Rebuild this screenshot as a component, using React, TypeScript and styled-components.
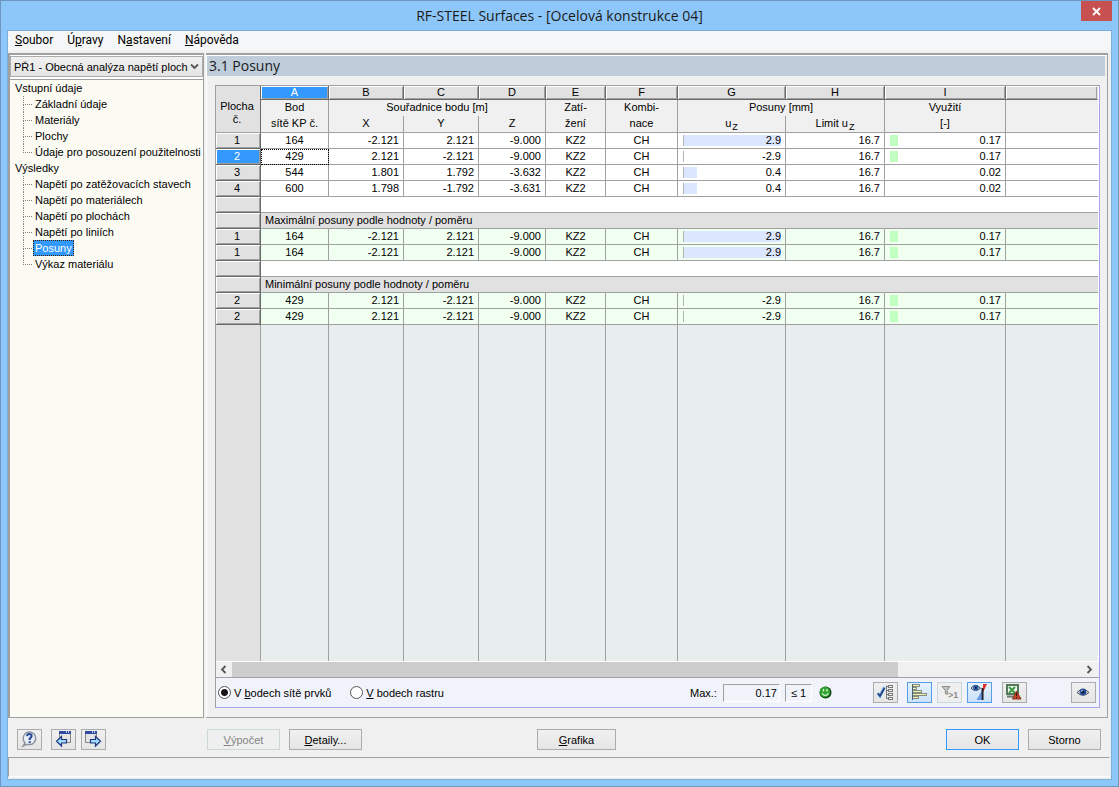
import React, { useState } from "react";
import styled, { createGlobalStyle, css } from "styled-components";

const LINE = "#a0a0a0";
const ACCENT = "#3399ff";
const UI_FONT = `"Liberation Sans", Arial, sans-serif`;
const MENU_FONT = `Roboto, "Noto Sans", sans-serif`;
const TITLE_FONT = `"Open Sans", "Noto Sans", sans-serif`;

const GlobalStyle = createGlobalStyle`
  *, *::before, *::after { box-sizing: border-box; }
  body { margin: 0; background: #8dc6f9; }
  button, input, select { font: inherit; color: inherit; }
`;

const Window = styled.div`
  display: flex;
  flex-direction: column;
  height: 100vh;
  min-height: 520px;
  border: 1px solid #6b97c2;
  background: #8dc6f9;
  color: #000;
  font: 11px/16px ${UI_FONT};
`;

const TitleBar = styled.header`
  display: grid;
  grid-template-columns: 37px 1fr 37px;
  height: 29px;
`;

const Title = styled.h1`
  margin: 0;
  font: 400 14px/29px ${TITLE_FONT};
  text-align: center;
  color: #1a1a1a;
`;

const CloseButton = styled.button`
  display: grid;
  place-items: center;
  width: 31px;
  height: 20px;
  padding: 0;
  border: 0;
  background: #c75050;
`;

const Client = styled.div`
  flex: 1;
  min-height: 0;
  display: flex;
  flex-direction: column;
  margin: 0 6px 6px;
  border: 1px solid #79afdd;
  background: #f0f0f0;
`;

const MenuBar = styled.nav`
  display: flex;
  gap: 14px;
  height: 19px;
  padding-left: 7px;
  background: #f5f6f7;
  font: 12px/19px ${MENU_FONT};
`;

const MenuItem = styled.button`
  padding: 0;
  border: 0;
  background: none;
`;

const Body = styled.div`
  flex: 1;
  min-height: 0;
  display: flex;
  gap: 2px;
  margin: 3px 3px 0 0;
`;

const Sidebar = styled.aside`
  flex: none;
  width: 196px;
  display: flex;
  flex-direction: column;
  padding-top: 1px;
  border: solid ${LINE};
  border-width: 2px 1px 1px 2px;
  background: #fff;
`;

const CaseField = styled.div`
  display: grid;
  height: 21px;
  margin-bottom: 2px;
  align-items: center;
`;

const CaseSelect = styled.select`
  grid-area: 1 / 1;
  width: 100%;
  height: 21px;
  padding: 0 12px 0 3px;
  appearance: none;
  border: 1px solid #acacac;
  border-radius: 0;
  background: linear-gradient(#f0f0f0, #e5e5e5);
`;

const CaseArrow = styled.svg`
  grid-area: 1 / 1;
  justify-self: end;
  margin-right: 4px;
  pointer-events: none;
`;

const Tree = styled.ul`
  flex: 1;
  margin: 0;
  padding: 0 0 0 5px;
  border-top: 1px solid ${LINE};
  list-style: none;
  background: #fcfbf3;
`;

const TreeBranch = styled.ul`
  margin: 0;
  padding: 0 0 0 8px;
  list-style: none;
`;

const TreeLeaf = styled.li`
  display: flex;
  gap: 1px;
  height: 16px;
`;

const TreeLines = styled.span<{ $last: boolean }>`
  width: 9px;
  &::before {
    content: "";
    display: block;
    height: 9px;
    border-left: 1px dotted #808080;
    border-bottom: 1px dotted #808080;
  }
  &::after {
    content: "";
    display: ${(p) => (p.$last ? "none" : "block")};
    height: 7px;
    border-left: 1px dotted #808080;
  }
`;

const TreeButton = styled.button<{ $selected: boolean }>`
  height: 16px;
  padding: 0 1px;
  border: 1px dotted ${(p) => (p.$selected ? "#3a2410" : "transparent")};
  background: ${(p) => (p.$selected ? ACCENT : "transparent")};
  color: ${(p) => (p.$selected ? "#fff" : "#000")};
  line-height: 14px;
  white-space: nowrap;
`;

const Main = styled.main`
  flex: 1;
  min-width: 0;
  display: flex;
  flex-direction: column;
  padding: 1px 0 0 1px;
  border: solid ${LINE};
  border-width: 2px 1px 1px 0;
  box-shadow: inset 1px 1px #fff;
`;

const Heading = styled.h2`
  height: 20px;
  margin: 0 2px 0 0;
  padding-left: 2px;
  background: #bfccda;
  color: #1a1a1a;
  font: 400 14px/20px ${TITLE_FONT};
`;

const Frame = styled.section`
  flex: 1;
  min-height: 0;
  display: flex;
  flex-direction: column;
  margin: 9px 7px 9px 8px;
  border: solid;
  border-width: 1px;
  border-color: ${LINE} #a6a6e6 #a6a6e6 ${LINE};
  background: #fff;
`;

const TableArea = styled.div`
  flex: 1;
  min-height: 0;
  overflow: hidden;
  padding-right: 1px;
`;

const Grid = styled.table`
  width: 100%;
  height: 100%;
  table-layout: fixed;
  border-spacing: 0;
  line-height: 15px;
`;

const bevel = css`
  background: #e1e1e1;
  border: solid #696969;
  border-width: 0 1px 1px 0;
  box-shadow: inset 1px 1px #fff, inset -1px -1px ${LINE};
`;

const ColumnLetter = styled.th<{ $selected?: boolean }>`
  ${bevel}
  height: 14px;
  padding: 0;
  font-weight: 400;
  line-height: 13px;
  ${(p) => p.$selected && `background: ${ACCENT}; color: #fff;`}
  &:last-child { border-right-color: #e1e1e1; }
`;

const CornerHead = styled.th`
  padding: 7px 2px 0 0;
  border-right: 1px solid #696969;
  border-bottom: 1px solid ${LINE};
  background: #e1e1e1;
  font-weight: 400;
  line-height: 13px;
`;

const HeadCell = styled.th<{ $top?: boolean }>`
  height: ${(p) => (p.$top ? 16 : 17)}px;
  padding: 0 0 2px;
  border: solid ${LINE};
  border-width: ${(p) => (p.$top ? "0 1px 0 0" : "0 1px 1px 0")};
  background: #f0f0f0;
  font-weight: 400;
  line-height: 14px;
  &:last-child { border-right: 0; }
`;

const Sub = styled.span`
  margin-left: 1px;
  font-size: 9px;
  line-height: 0;
  vertical-align: sub;
`;

const RowHead = styled.th<{ $selected?: boolean }>`
  ${bevel}
  height: 16px;
  padding: 0 2px 0 0;
  font-weight: 400;
  ${(p) => p.$selected && `background: ${ACCENT}; color: #fff;`}
`;

const Cell = styled.td<{ $align?: "center" | "right"; $green?: boolean; $focus?: boolean }>`
  height: 16px;
  padding: 0 ${(p) => (p.$align === "right" ? 4 : 0)}px 0 0;
  border: solid ${LINE};
  border-width: 0 1px 1px 0;
  background: ${(p) => (p.$green ? "#f0fff0" : "#fff")};
  text-align: ${(p) => p.$align};
  ${(p) => p.$focus && "outline: 1px dotted #000; outline-offset: -1px;"}
  &:last-child { border-right: 0; }
`;

const SectionCell = styled.td<{ $title?: boolean }>`
  height: 16px;
  padding: 0 0 0 4px;
  border-bottom: 1px solid ${LINE};
  background: ${(p) => (p.$title ? "#e1e1e1" : "#fff")};
`;

const FillerCell = styled.td<{ $head?: boolean }>`
  padding: 0;
  border-right: 1px solid ${LINE};
  background: ${(p) => (p.$head ? "#e1e1e1" : "#e8eeee")};
  &:last-child { border-right: 0; }
`;

const Meter = styled.div`
  display: grid;
  align-items: center;
  padding-left: 5px;
`;

const Bar = styled.span<{ $color: string; $edge?: boolean }>`
  grid-area: 1 / 1;
  height: 11px;
  border-left: ${(p) => (p.$edge ? `1px solid #b4b4b4` : "0")};
  background: ${(p) => p.$color};
`;

const MeterValue = styled.span`
  grid-area: 1 / 1;
`;

const ScrollBar = styled.div`
  display: grid;
  grid-template-columns: 16px 1fr 18px;
  height: 17px;
  border-top: 1px solid #fff;
  border-bottom: 1px solid ${LINE};
  background: #f0f0f0;
`;

const ScrollButton = styled.button`
  display: grid;
  place-items: center;
  padding: 0 2px 0 0;
  border: 0;
  background: none;
`;

const ScrollThumb = styled.div`
  width: 78.5%;
  background: #cdcdcd;
`;

const Options = styled.div`
  display: flex;
  align-items: center;
  height: 29px;
  padding: 0 3px 0 2px;
  background: #f0f3fa;
`;

const RadioLabel = styled.label`
  display: flex;
  align-items: center;
  gap: 3px;
  margin-right: 19px;
  white-space: nowrap;
`;

const Radio = styled.input`
  appearance: none;
  width: 13px;
  height: 13px;
  margin: 0;
  border: 1px solid #555;
  border-radius: 50%;
  background: #fff;
  &:checked { background: radial-gradient(circle, #1a1418 0 3px, #fff 4px); }
`;

const MaxLabel = styled.label`
  width: 33px;
  margin-left: auto;
`;

const MaxInput = styled.input`
  width: 57px;
  height: 18px;
  margin-right: 5px;
  padding: 0 2px;
  border: solid;
  border-width: 1px;
  border-color: ${LINE} #fff #fff ${LINE};
  background: #f0f3fa;
  text-align: right;
`;

const LimitBox = styled.output`
  width: 27px;
  height: 18px;
  margin-right: 7px;
  border: solid;
  border-width: 1px;
  border-color: ${LINE} #fff #fff ${LINE};
  text-align: center;
`;

const ToolGroup = styled.div<{ $before: number; $gap?: number }>`
  display: flex;
  gap: ${(p) => p.$gap ?? 5}px;
  margin-left: ${(p) => p.$before}px;
`;

const IconButton = styled.button<{ $active?: boolean }>`
  flex: none;
  width: 25px;
  height: 21px;
  padding: 0;
  border: 1px solid ${(p) => (p.$active ? "#569de5" : "#acacac")};
  background: ${(p) => (p.$active ? "linear-gradient(#e6f2fd, #c9e2fa)" : "linear-gradient(#f0f0f0, #e5e5e5)")};
  &:disabled { border-color: #ccd8d8; background: #efefef; }
  svg { display: block; }
`;

const Footer = styled.footer`
  display: flex;
  height: 39px;
  padding: 11px 10px 0 9px;
`;

const FooterIcons = styled.div`
  display: flex;
  flex: none;
  gap: 5px;
  width: 190px;
`;

const FooterIconGap = styled.span`
  width: 4px;
  margin-left: -5px;
`;

const PushButton = styled.button<{ $primary?: boolean; $wide?: boolean }>`
  flex: none;
  width: ${(p) => (p.$wide ? 79 : 73)}px;
  height: 21px;
  padding: 0;
  border: 1px solid ${(p) => (p.$primary ? ACCENT : "#acacac")};
  background: linear-gradient(#f0f0f0, #e5e5e5);
  &:disabled { border-color: #ccd8d8; background: #efefef; color: #838383; }
`;

const ButtonPair = styled.div`
  display: flex;
  gap: 9px;
  &:last-child { margin-left: auto; }
`;

const MiddleButton = styled.div`
  margin-left: 175px;
`;

const StatusBar = styled.div`
  flex: none;
  height: 20px;
  margin: 0 1px 2px 0;
  border: solid;
  border-width: 1px;
  border-color: ${LINE} #f0f0f0 #fff ${LINE};
`;

const Glyph = ({ children }: { children: React.ReactNode }) => (
  <svg width="23" height="19" viewBox="0 0 23 19" aria-hidden="true">
    {children}
  </svg>
);

const HelpIcon = () => (
  <Glyph>
    <path d="M5 16l2-3.2A6.3 6.3 0 1 1 11.500 14.600Q9 14.600 8 14.500Z" fill="#e9edf4" stroke="#8c929a" strokeWidth="1.400" />
    <path d="M9 6.200Q9.300 3.800 11.600 3.900Q14 4.200 13.500 6.500Q13 7.700 11.700 8.500V10" fill="none" stroke="#24459c" strokeWidth="2" />
    <path d="M10.700 11.200h2v2h-2z" fill="#24459c" />
  </Glyph>
);

const PageArrowIcon = ({ next }: { next?: boolean }) => (
  <Glyph>
    <rect x={next ? 3.5 : 7.5} y="2.500" width="11" height="10" fill="#e4e4e4" stroke="#8a8a8a" />
    <rect x={next ? 3 : 7} y="1" width="12" height="3" fill="#2f4ba0" />
    <path d={next ? "M10 1h1v2h-1zM12 1h1v2h-1z" : "M14 1h1v2h-1zM16 1h1v2h-1z"} fill="#b9c6ea" />
    <path
      d={next ? "M8.500 9.500h5V6.500l5 4.800-5 4.700v-3h-5z" : "M14.500 9.500h-5V6.500l-5 4.800 5 4.700v-3h5z"}
      fill="#9fdcff"
      stroke="#20367f"
      strokeWidth="1.200"
    />
  </Glyph>
);

const CheckTreeIcon = () => (
  <Glyph>
    <path d="M12.500 2.500v13M12.500 3.500h2M12.500 7.500h2M12.500 11.500h2M12.500 15.500h2" stroke="#777" fill="none" />
    {[2.5, 6.5, 10.5, 14.5].map((y) => (
      <rect key={y} x="14.500" y={y} width="4" height="2" fill="#f4f4f4" stroke="#777" />
    ))}
    <path d="M3.500 10L6 13L10.500 4" fill="none" stroke="#8db3e2" strokeWidth="3" />
    <path d="M4 10.500L6 13L10.500 5" fill="none" stroke="#1c437f" strokeWidth="1.600" />
  </Glyph>
);

const BarsIcon = () => (
  <Glyph>
    {[[2, 7], [5, 4], [8, 9], [11, 14], [14, 6]].map(([y, w]) => (
      <rect key={y} x="4.500" y={y - 0.5} width={w} height="2" fill="#f0f0b0" stroke="#7b8576" strokeWidth="0.900" />
    ))}
    <path d="M4.500 1v16" stroke="#4c6272" />
  </Glyph>
);

const FilterIcon = () => (
  <Glyph>
    <path d="M4 3.500h8L9.300 7.500v4l-2-1v-3z" fill="#c4c4c4" stroke="#8b8b8b" />
    <text x="10" y="15" fontFamily="Liberation Sans" fontSize="9" fontWeight="700" fill="#8b8b8b">&gt;1</text>
  </Glyph>
);

const EyeScaleIcon = () => (
  <Glyph>
    <path d="M14 1h5l-3 7.500h-2z" fill="#fff" />
    <path d="M15 1h4l-3.500 7.500h-1z" fill="#d93030" />
    <path d="M13.500 8v9H8.500z" fill="#6d9bea" />
    <path d="M14.500 5v12" stroke="#1c1c2c" strokeWidth="2" />
    <path d="M3 5.200Q7.500-.5 12.500 5.200Q7.500 9.800 3 5.200Z" fill="#dfe6ee" stroke="#33414f" />
    <circle cx="7.800" cy="4.800" r="2.700" fill="#2c5caa" />
    <circle cx="7.800" cy="4.800" r="1" fill="#0b1a38" />
  </Glyph>
);

const ExcelIcon = () => (
  <Glyph>
    <rect x="4" y="2" width="11" height="9" fill="#eef6ec" stroke="#55785a" strokeWidth="2" />
    <path d="M6 4l6 6M12 4l-6 6" stroke="#3d9a46" strokeWidth="2" />
    <path d="M4 13.500h7" stroke="#6b7b6c" strokeWidth="2" />
    <path d="M13.500 8l4.500 8h-8.500z" fill="#c5472a" stroke="#8c2f1c" />
    <path d="M13.500 10v3M13.500 14v1" stroke="#2e120c" />
  </Glyph>
);

const EyeIcon = () => (
  <Glyph>
    <path d="M5 9.500Q11 3 17 9.500Q11 15 5 9.500Z" fill="#d5d9df" stroke="#4c5460" />
    <circle cx="11" cy="9" r="3.400" fill="#2c559f" />
    <circle cx="11" cy="9" r="1.500" fill="#0a1228" />
    <circle cx="10" cy="7.900" r="0.800" fill="#b8d0f4" />
  </Glyph>
);

const Smiley = () => (
  <svg width="13" height="13" viewBox="0 0 13 13" role="img" aria-label="OK">
    <circle cx="6.500" cy="6.500" r="6" fill="#123d12" />
    <circle cx="6" cy="6" r="5.200" fill="#2fa52f" />
    <path d="M4.500 3v2.500M8 3v2.500" stroke="#d8f5d0" strokeWidth="1.400" />
    <path d="M3 7.300Q6.200 11.500 9.500 7.300" fill="none" stroke="#e6f8e0" strokeWidth="1.200" />
  </svg>
);

const treeData = [
  { title: "Vstupní údaje", items: ["Základní údaje", "Materiály", "Plochy", "Údaje pro posouzení použitelnosti"] },
  {
    title: "Výsledky",
    items: [
      "Napětí po zatěžovacích stavech",
      "Napětí po materiálech",
      "Napětí po plochách",
      "Napětí po liniích",
      "Posuny",
      "Výkaz materiálu",
    ],
  },
];

const columnWidths = [45, 68, 75, 75, 67, 60, 72, 108, 99, 121];
const letters = ["A", "B", "C", "D", "E", "F", "G", "H", "I"];

type Row = { id: number; node: string; x: string; y: string; z: string; uz: number; ratio: number };

const rows: Row[] = [
  { id: 1, node: "164", x: "-2.121", y: "2.121", z: "-9.000", uz: 2.9, ratio: 0.17 },
  { id: 2, node: "429", x: "2.121", y: "-2.121", z: "-9.000", uz: -2.9, ratio: 0.17 },
  { id: 3, node: "544", x: "1.801", y: "1.792", z: "-3.632", uz: 0.4, ratio: 0.02 },
  { id: 4, node: "600", x: "1.798", y: "-1.792", z: "-3.631", uz: 0.4, ratio: 0.02 },
];

const DataRow = ({ row, green, selected }: { row: Row; green?: boolean; selected?: boolean }) => (
  <tr>
    <RowHead scope="row" $selected={selected}>{row.id}</RowHead>
    <Cell $align="center" $green={green} $focus={selected}>{row.node}</Cell>
    <Cell $align="right" $green={green}>{row.x}</Cell>
    <Cell $align="right" $green={green}>{row.y}</Cell>
    <Cell $align="right" $green={green}>{row.z}</Cell>
    <Cell $align="center" $green={green}>KZ2</Cell>
    <Cell $align="center" $green={green}>CH</Cell>
    <Cell $align="right" $green={green}>
      <Meter>
        <Bar $color="#dbe6ff" $edge style={{ width: `${Math.max(1, (row.uz / 2.9) * 100)}%` }} />
        <MeterValue>{row.uz.toFixed(1)}</MeterValue>
      </Meter>
    </Cell>
    <Cell $align="right" $green={green}>16.7</Cell>
    <Cell $align="right" $green={green}>
      <Meter>
        {row.ratio > 0.05 && <Bar $color="#c0ffc0" style={{ width: `${row.ratio * 42}%` }} />}
        <MeterValue>{row.ratio.toFixed(2)}</MeterValue>
      </Meter>
    </Cell>
    <Cell $green={green} />
  </tr>
);

const SectionRow = ({ title }: { title?: string }) => (
  <tr>
    <RowHead />
    <SectionCell colSpan={10} $title={Boolean(title)}>{title}</SectionCell>
  </tr>
);

const ResultTable = () => (
  <Grid>
    <colgroup>
      {columnWidths.map((w, i) => <col key={i} width={w} />)}
      <col />
    </colgroup>
    <thead>
      <tr>
        <CornerHead rowSpan={3}>Plocha<br />č.</CornerHead>
        {letters.map((l) => <ColumnLetter key={l} $selected={l === "A"}>{l}</ColumnLetter>)}
        <ColumnLetter />
      </tr>
      <tr>
        <HeadCell $top>Bod</HeadCell>
        <HeadCell $top colSpan={3}>Souřadnice bodu [m]</HeadCell>
        <HeadCell $top>Zatí-</HeadCell>
        <HeadCell $top>Kombi-</HeadCell>
        <HeadCell $top colSpan={2}>Posuny [mm]</HeadCell>
        <HeadCell $top>Využití</HeadCell>
        <HeadCell $top />
      </tr>
      <tr>
        <HeadCell>sítě KP č.</HeadCell>
        <HeadCell>X</HeadCell>
        <HeadCell>Y</HeadCell>
        <HeadCell>Z</HeadCell>
        <HeadCell>žení</HeadCell>
        <HeadCell>nace</HeadCell>
        <HeadCell>u<Sub>Z</Sub></HeadCell>
        <HeadCell>Limit u<Sub>Z</Sub></HeadCell>
        <HeadCell>[-]</HeadCell>
        <HeadCell />
      </tr>
    </thead>
    <tbody>
      {rows.map((r) => <DataRow key={r.id} row={r} selected={r.id === 2} />)}
      <SectionRow />
      <SectionRow title="Maximální posuny podle hodnoty / poměru" />
      <DataRow row={rows[0]} green />
      <DataRow row={rows[0]} green />
      <SectionRow />
      <SectionRow title="Minimální posuny podle hodnoty / poměru" />
      <DataRow row={rows[1]} green />
      <DataRow row={rows[1]} green />
      <tr>
        <FillerCell $head />
        {[...letters, ""].map((l) => <FillerCell key={l} />)}
      </tr>
    </tbody>
  </Grid>
);

export default function App() {
  const [page, setPage] = useState("Posuny");
  const [mode, setMode] = useState("mesh");

  return (
    <>
      <GlobalStyle />
      <Window>
        <TitleBar>
          <span />
          <Title>RF-STEEL Surfaces - [Ocelová konstrukce 04]</Title>
          <CloseButton aria-label="Zavřít">
            <svg width="9" height="9" viewBox="0 0 9 9"><path d="M1 1l7 7M8 1l-7 7" stroke="#fff" strokeWidth="1.800" /></svg>
          </CloseButton>
        </TitleBar>
        <Client>
          <MenuBar>
            <MenuItem><u>S</u>oubor</MenuItem>
            <MenuItem>Ú<u>p</u>ravy</MenuItem>
            <MenuItem>N<u>a</u>stavení</MenuItem>
            <MenuItem><u>N</u>ápověda</MenuItem>
          </MenuBar>
          <Body>
            <Sidebar>
              <CaseField>
                <CaseSelect aria-label="Případ">
                  <option>PŘ1 - Obecná analýza napětí ploch</option>
                </CaseSelect>
                <CaseArrow width="9" height="7" viewBox="0 0 9 7">
                  <path d="M1 1.500l3.500 3.500L8 1.500" fill="none" stroke="#555" strokeWidth="1.800" />
                </CaseArrow>
              </CaseField>
              <Tree>
                {treeData.map((group) => (
                  <li key={group.title}>
                    {group.title}
                    <TreeBranch>
                      {group.items.map((item, i) => (
                        <TreeLeaf key={item}>
                          <TreeLines $last={i === group.items.length - 1} />
                          <TreeButton $selected={item === page} onClick={() => setPage(item)}>{item}</TreeButton>
                        </TreeLeaf>
                      ))}
                    </TreeBranch>
                  </li>
                ))}
              </Tree>
            </Sidebar>
            <Main>
              <Heading>3.1 Posuny</Heading>
              <Frame>
                <TableArea><ResultTable /></TableArea>
                <ScrollBar>
                  <ScrollButton aria-label="Posunout vlevo">
                    <svg width="7" height="9" viewBox="0 0 7 9"><path d="M5.500 1L2 4.500L5.500 8" fill="none" stroke="#555" strokeWidth="1.800" /></svg>
                  </ScrollButton>
                  <ScrollThumb />
                  <ScrollButton aria-label="Posunout vpravo">
                    <svg width="7" height="9" viewBox="0 0 7 9"><path d="M1.500 1L5 4.500L1.500 8" fill="none" stroke="#555" strokeWidth="1.800" /></svg>
                  </ScrollButton>
                </ScrollBar>
                <Options>
                  <RadioLabel>
                    <Radio type="radio" name="mode" checked={mode === "mesh"} onChange={() => setMode("mesh")} />
                    <span>V <u>b</u>odech sítě prvků</span>
                  </RadioLabel>
                  <RadioLabel>
                    <Radio type="radio" name="mode" checked={mode === "grid"} onChange={() => setMode("grid")} />
                    <span><u>V</u> bodech rastru</span>
                  </RadioLabel>
                  <MaxLabel htmlFor="max">Max.:</MaxLabel>
                  <MaxInput id="max" readOnly value="0.17" />
                  <LimitBox>≤ 1</LimitBox>
                  <Smiley />
                  <ToolGroup $before={41} $gap={9}>
                    <IconButton aria-label="Výběr"><CheckTreeIcon /></IconButton>
                    <IconButton $active aria-label="Sloupce"><BarsIcon /></IconButton>
                  </ToolGroup>
                  <ToolGroup $before={5}>
                    <IconButton disabled aria-label="Filtr"><FilterIcon /></IconButton>
                    <IconButton $active aria-label="Barevná škála"><EyeScaleIcon /></IconButton>
                  </ToolGroup>
                  <ToolGroup $before={10}>
                    <IconButton aria-label="Excel"><ExcelIcon /></IconButton>
                  </ToolGroup>
                  <ToolGroup $before={44}>
                    <IconButton aria-label="Zobrazit"><EyeIcon /></IconButton>
                  </ToolGroup>
                </Options>
              </Frame>
            </Main>
          </Body>
          <Footer>
            <FooterIcons>
              <IconButton aria-label="Nápověda"><HelpIcon /></IconButton>
              <FooterIconGap />
              <IconButton aria-label="Předchozí"><PageArrowIcon /></IconButton>
              <IconButton aria-label="Další"><PageArrowIcon next /></IconButton>
            </FooterIcons>
            <ButtonPair>
              <PushButton disabled><u>V</u>ýpočet</PushButton>
              <PushButton><u>D</u>etaily...</PushButton>
            </ButtonPair>
            <MiddleButton>
              <PushButton $wide><u>G</u>rafika</PushButton>
            </MiddleButton>
            <ButtonPair>
              <PushButton $primary>OK</PushButton>
              <PushButton>Storno</PushButton>
            </ButtonPair>
          </Footer>
          <StatusBar />
        </Client>
      </Window>
    </>
  );
}
